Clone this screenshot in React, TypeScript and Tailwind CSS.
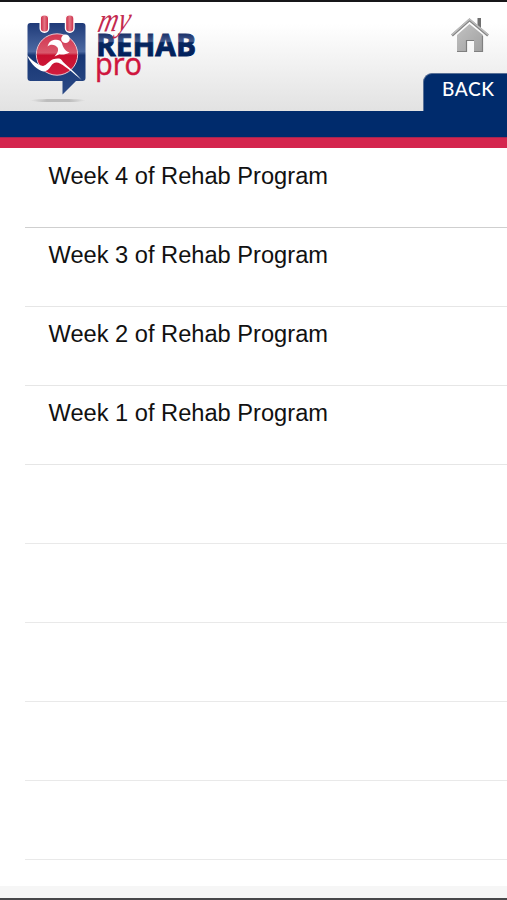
const weeks = [4, 3, 2, 1];
const emptyRows = [1, 2, 3, 4, 5];

function Logo() {
  return (
    <svg className="ml-[20px] shrink-0 overflow-visible" width="200" height="108" viewBox="20 2 200 108">
      <defs>
        <linearGradient id="card" x1="0" y1="0" x2="0" y2="1">
          <stop offset="0" stopColor="#1f3a78" />
          <stop offset="0.4" stopColor="#4c69a2" />
          <stop offset="0.45" stopColor="#173674" />
          <stop offset="1" stopColor="#2a4986" />
        </linearGradient>
        <linearGradient id="ball" x1="0" y1="0" x2="0" y2="1">
          <stop offset="0" stopColor="#d23450" />
          <stop offset="0.46" stopColor="#d9596c" />
          <stop offset="0.52" stopColor="#c8102f" />
          <stop offset="1" stopColor="#d01d3e" />
        </linearGradient>
        <linearGradient id="ring" x1="0" y1="0" x2="1" y2="0">
          <stop offset="0" stopColor="#c9203f" />
          <stop offset="0.5" stopColor="#e27583" />
          <stop offset="1" stopColor="#c9203f" />
        </linearGradient>
        <linearGradient id="word" gradientUnits="userSpaceOnUse" x1="0" y1="33" x2="0" y2="56">
          <stop offset="0" stopColor="#162d66" />
          <stop offset="0.36" stopColor="#41598d" />
          <stop offset="0.42" stopColor="#06265f" />
          <stop offset="1" stopColor="#00205c" />
        </linearGradient>
        <linearGradient id="shadow" x1="0" y1="0" x2="1" y2="0">
          <stop offset="0" stopColor="#bbb" stopOpacity="0" />
          <stop offset="0.3" stopColor="#bdbdbd" />
          <stop offset="0.7" stopColor="#bdbdbd" />
          <stop offset="1" stopColor="#bbb" stopOpacity="0" />
        </linearGradient>
      </defs>

      {/* calendar bubble */}
      <ellipse cx="58" cy="100.5" rx="28" ry="1.600" fill="url(#shadow)" />
      <path d="M30.500 23H82.500Q85.500 23 85.500 26V78Q85.500 81 82.500 81H76L62.500 94.500V81H30.500Q27.500 81 27.500 78V26Q27.500 23 30.500 23Z" fill="url(#card)" />
      <circle cx="57" cy="54.500" r="20.700" fill="url(#ball)" stroke="#e9c6cf" strokeWidth="1" />
      <rect x="40.200" y="14.800" width="8.500" height="17.500" rx="4" fill="url(#ring)" stroke="#fff" strokeWidth="1.400" />
      <rect x="65.500" y="14.800" width="8.500" height="17.500" rx="4" fill="url(#ring)" stroke="#fff" strokeWidth="1.400" />

      {/* runner */}
      <circle cx="65.500" cy="38.700" r="4.300" fill="#fff" />
      <path d="M47.500 46.500C48.500 42.500 50.500 40.600 53.500 40C57.500 39.200 60.500 40 61.800 43C63 46.500 64 50.500 69.500 52.500C65.500 54.800 62 54.800 59.500 54.200L54.500 56.500C57.500 53 59 50.500 57.500 47.500C55.500 44.500 50.500 43.500 47.500 46.500Z" fill="#fff" />
      <path d="M27 55C32 60.500 38 65 43 66C46.500 65.500 49 61 53 59.300C57 58 61 58 62 60.500C63.500 63.500 73 69.500 81.500 80C74 73.500 66 67 60.500 63.800C56.500 61.300 53 62.500 51 66C48.500 70 45.500 72.500 41.500 71C35 68 29.500 62 27 55Z" fill="#fff" />

      {/* wordmark */}
      <text x="96" y="55.500" textLength="100" lengthAdjust="spacingAndGlyphs" fill="url(#word)" stroke="url(#word)" strokeWidth="0.900" fontFamily="'Open Sans', sans-serif" fontWeight="700" fontSize="31">REHAB</text>
      <text x="95" y="74.500" textLength="47" lengthAdjust="spacingAndGlyphs" fill="#cf153e" stroke="#cf153e" strokeWidth="0.500" fontFamily="'Open Sans', sans-serif" fontSize="31">pro</text>
      <text transform="translate(96.500 32) rotate(-3) skewX(-16)" textLength="32" lengthAdjust="spacingAndGlyphs" fill="#c42a50" fontFamily="'Liberation Serif', serif" fontStyle="italic" fontSize="34">my</text>
    </svg>
  );
}

function HomeIcon() {
  return (
    <svg className="absolute right-[17px] top-[15px]" width="40" height="37" viewBox="0 0 40 37">
      <defs>
        <linearGradient id="house" x1="0" y1="0" x2="1" y2="1">
          <stop offset="0" stopColor="#c2c2c2" />
          <stop offset="1" stopColor="#a0a0a0" />
        </linearGradient>
      </defs>
      <path d="M27.500 1H31V12L27.500 9Z" fill="#707070" />
      <path d="M7 18L19.500 7L33 18V35H24V23.500H16.500V35H7Z" fill="url(#house)" />
      <path d="M7 34.500H16.500M24 34.500H33M32.500 19V35" fill="none" stroke="#808080" strokeWidth="1.200" />
      <path d="M2 18.500L19.500 3L38 18.500" fill="none" stroke="#858585" strokeWidth="2.600" />
      <path d="M2 17.600L19.500 2.200L38 17.600" fill="none" stroke="#bdbdbd" strokeWidth="1.500" />
      <path d="M16.500 35V23.500H24" fill="none" stroke="#7c7c7c" strokeWidth="1.200" />
    </svg>
  );
}

export default function App() {
  return (
    <div className="flex h-[900px] w-full flex-col overflow-hidden bg-white font-['Liberation_Sans',Arial,sans-serif]">
      <header className="relative flex h-[111px] shrink-0 items-start justify-between border-t-2 border-[#171719] bg-linear-to-b from-white from-20% to-[#e2e2e2]">
        <Logo />
        <HomeIcon />
        <button
          className="h-[38px] w-[84px] self-end rounded-tl-[9px] border-l border-t border-[#587096] bg-[#002b6c] pb-[8px] pl-[18px] text-left font-[Lato,sans-serif] text-[19px] font-medium leading-[30px] tracking-[0.6px] text-white"
        >
          BACK
        </button>
      </header>
      <div className="h-[26px] shrink-0 bg-[#002b6c]" />
      <div className="h-[11px] shrink-0 border-t border-[#a32652] bg-[#d4264e]" />

      <ul className="flex-1 pl-[25px]">
        {weeks.map((week, i) => (
          <li
            key={week}
            className={
              i === 0
                ? 'h-[80px] border-b border-[#cfcfcf] pl-[23.5px] pt-[14px] text-[23.65px] leading-7 text-[#111]'
                : 'h-[79px] border-b border-[#e6e6e6] pl-[23.5px] pt-[13px] text-[23.65px] leading-7 text-[#111]'
            }
          >
            Week {week} of Rehab Program
          </li>
        ))}
        {emptyRows.map((row) => (
          <li key={row} className="h-[79px] border-b border-[#e9e9e9]" />
        ))}
      </ul>
      <footer className="h-[14px] shrink-0 border-b-2 border-[#48484a] bg-[#f6f6f6]" />
    </div>
  );
}
